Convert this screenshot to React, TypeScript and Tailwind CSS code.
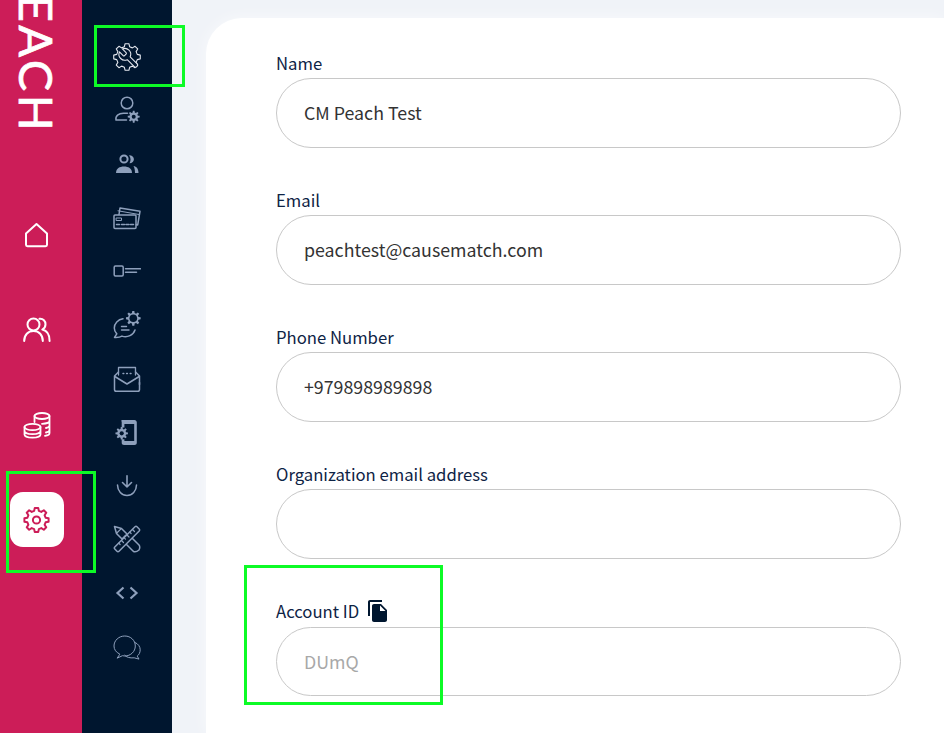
import type { ReactNode } from 'react';
import { MdFileCopy } from 'react-icons/md';

const NAV_BG = '#00162f';
const NAV_ICON = '#8ea0bc';

// builds a toothed gear outline, used by several of the settings icons
const gearPath = (cx: number, cy: number, outer: number, inner: number, teeth: number) => {
    const pts: string[] = [];
    const step = (Math.PI * 2) / teeth;
    for (let i = 0; i < teeth; i++) {
        const a = i * step - Math.PI / 2;
        const angles: [number, number][] = [
            [a - step * 0.18, outer],
            [a + step * 0.18, outer],
            [a + step * 0.32, inner],
            [a + step * 0.68, inner],
        ];
        angles.forEach(([ang, r]) => {
            pts.push(`${(cx + Math.cos(ang) * r).toFixed(2)} ${(cy + Math.sin(ang) * r).toFixed(2)}`);
        });
    }
    return `M${pts.join('L')}Z`;
};

const Icon = ({ children, className, size = 28 }: { children: ReactNode; className?: string; size?: number }) => (
    <svg
        width={size}
        height={size}
        viewBox={`0 0 ${size} ${size}`}
        fill="none"
        stroke="currentColor"
        strokeWidth="1.5"
        strokeLinecap="round"
        strokeLinejoin="round"
        className={className}
    >
        {children}
    </svg>
);

const toolIcons: ReactNode[] = [
    <>
        <path d={gearPath(14, 14, 13.4, 10.6, 8)} strokeWidth="1.1" />
        <path
            d="M14.7 6.3a1 1 0 0 0 0 1.4l1.6 1.6a1 1 0 0 0 1.4 0l3.77-3.77a6 6 0 0 1-7.94 7.94l-6.91 6.91a2.12 2.12 0 0 1-3-3l6.91-6.91a6 6 0 0 1 7.94-7.94l-3.76 3.76z"
            transform="translate(27.500 3.500) scale(-0.98 0.98)"
            fill={NAV_BG}
            strokeWidth="1.1"
        />
    </>,
    <>
        <circle cx="14" cy="7" r="5.800" />
        <path d="M3 24c-.8-4 2.500-6.800 7.500-6.800h4M3 24h10.500" />
        <path d={gearPath(20.700, 20.700, 6, 4.300, 8)} fill="currentColor" stroke="none" />
        <circle cx="20.700" cy="20.700" r="2" fill={NAV_BG} stroke="none" />
    </>,
    <>
        <circle cx="11" cy="9" r="3.600" strokeWidth="2" />
        <path d="M3 23c0-4.500 3.600-6.500 8-6.500s8 2 8 6.500Z" fill="currentColor" stroke="none" />
        <path d="M16 5.200c3.200 0 4.900 2 4.900 4s-1.700 4-4.400 4c1.500-2.400 1.500-5.400-.5-8Z" fill="currentColor" stroke="none" />
        <path d="M20.500 16c3 .6 5 2.700 5 7h-3.500c0-3-.4-5-1.500-7Z" fill="currentColor" stroke="none" />
    </>,
    <>
        <rect x="1" y="11" width="22" height="13.500" rx="1" />
        <path d="M6 10.500l1-6.500 20 3.300-2.300 13.700-1.400-.2" />
        <path d="M5 6.800l21.500 3.800" strokeWidth="1" />
        <rect x="3.500" y="14" width="5" height="2.500" strokeWidth="1" />
        <path d="M3.500 20.500h3M8.500 20.500h3M13 20.500h3M17.500 20.500h3" strokeWidth="1.500" />
    </>,
    <>
        <rect x="1.200" y="9" width="9" height="10" rx="1.200" />
        <path d="M12.500 11.800h15M12.500 15.200h11" strokeWidth="1.500" />
    </>,
    <>
        <path d="M10 7.800C5 8.500 1.300 12.300 1.300 17c0 2.400 1 4.400 2.500 5.900l-2.300 3.500c3.500.2 6-.4 7.500-1.300 5.500 1.700 11.400-1 13-6.100" />
        <path d="M8.500 15.500h5M8.500 19h7.500" strokeWidth="1.400" />
        <path d={gearPath(20.300, 7.300, 7.400, 5.400, 8)} fill="currentColor" stroke="none" />
        <circle cx="20.300" cy="7.300" r="3.800" fill={NAV_BG} stroke="none" />
    </>,
    <>
        <path d="M5.500 10V2.500h17V10" strokeWidth="1.300" />
        <path d="M5.500 7 1.500 11v13.500c0 1.100.8 1.800 1.800 1.800h21.400c1 0 1.800-.7 1.800-1.800V11l-4-4" />
        <path d="M1.800 11.500 14 19l12.200-7.500M26.500 19.500v-2" />
        <path d="M10 8.500h.8M13.600 8.500h.8M17.200 8.500h.8" />
    </>,
    <>
        <path
            d="M9 2h12.500c1.300 0 2.300 1 2.300 2.300v20.400c0 1.300-1 2.300-2.300 2.300H11c-1.300 0-2.300-1-2.300-2.300v-3.400h2.700V23h9.800V6H11.400v3.500H8.700V4.300C8.700 3 7.700 2 9 2Z"
            fill="currentColor"
            stroke="none"
        />
        <path d={gearPath(8.700, 15.300, 6.300, 4.500, 8)} fill="currentColor" stroke="none" />
        <circle cx="8.700" cy="15.300" r="2.100" fill={NAV_BG} stroke="none" />
    </>,
    <>
        <path d="M14 3.700V15M9.500 10.500 14 15l4.500-4.500" strokeWidth="1.600" />
        <path d="M4.500 13a9.500 10.500 0 0 0 19 0" />
    </>,
    <>
        <path d="M1.500 1.500 8.500 3.500 14 9 9 14 3.500 8.500Z" />
        <path d="M3.800 8 8 3.800" strokeWidth="1.200" />
        <path d="M19.500 13.500 26 20Q27.500 22 26 25Q23 27.500 20.500 26.500L13.500 19.500" />
        <path d="M22 1.800c.6-.6 1.400-.6 2 0l2.200 2.200c.6.600.6 1.400 0 2L6 26.200c-.6.600-1.400.6-2 0L1.800 24c-.6-.6-.6-1.400 0-2Z" fill={NAV_BG} />
        <path d="M19.500 4.500l2 2M16.800 7.200l1.300 1.300M14 10l2 2M11.200 12.800l1.300 1.300M8.500 15.500l2 2M5.800 18.200l1.300 1.300" strokeWidth="1.200" />
    </>,
    <>
        <path d="M10.500 8.500 4.500 14l6 5.500M17.500 8.500l6 5.500-6 5.500" strokeWidth="2.200" strokeLinecap="butt" strokeLinejoin="miter" />
    </>,
    <>
        <path d="M6.500 21C3 19.400 1 16.400 1 13 1 7.400 5.900 3 11.800 3s10.500 4.400 10.500 10-4.700 10-10.500 10c-.8 0-1.600-.1-2.400-.3L4.500 25Z" strokeWidth="1" />
        <path d="M22 9.500c3.200 1.200 5.200 4.300 5.200 7.200 0 2.800-1.100 5-3 6.400l1.800 3-4.800-1.300c-4.300.5-8-.6-9.500-2.500" strokeWidth="1" />
    </>,
];

const fields = [
    { label: 'Name', value: 'CM Peach Test' },
    { label: 'Email', value: 'peachtest@causematch.com' },
    { label: 'Phone Number', value: '+979898989898' },
    { label: 'Organization email address', value: '' },
];

const Callout = ({ className }: { className: string }) => (
    <div className={`pointer-events-none absolute border-[3px] border-[#0dfb26] ${className}`} />
);

export default function App() {
    return (
        <div className="relative flex h-[733px] w-[944px] overflow-hidden bg-[#f0f3f8] font-['Noto_Sans_CJK_SC','Noto_Sans',sans-serif]">
            <aside className="flex w-[82px] shrink-0 flex-col bg-[#cc1d58]">
                <div className="h-[188px] w-[74px] overflow-hidden">
                    <div className="mt-[-37px] ml-[13px] font-['Lato',sans-serif] text-[47px] leading-[47px] font-normal tracking-[3.500px] text-white [-webkit-text-stroke:0.7px_white] [writing-mode:vertical-rl]">
                        PEACH
                    </div>
                </div>
                <div className="flex w-[74px] flex-col items-center text-white">
                    <div className="flex h-[94.7px] items-center justify-center">
                        <Icon>
                            <path d="M3 12.500 13.500 3 24 12.500v11.300c0 .8-.6 1.400-1.400 1.400H4.400c-.8 0-1.400-.6-1.400-1.400Z" strokeWidth="2" />
                        </Icon>
                    </div>
                    <div className="flex h-[94.7px] items-center justify-center">
                        <Icon>
                            <circle cx="10.500" cy="8.500" r="6" strokeWidth="2" />
                            <path d="M1.200 25c0-6 3.800-10 9.300-10s9.300 4 9.300 10" strokeWidth="2" />
                            <path d="M16.500 2.800c3.800-.4 6 2.400 6 5.400 0 2.400-1.200 4.300-3.200 5.400 4.600 1 7.300 5 7.300 11.400" strokeWidth="2" />
                        </Icon>
                    </div>
                    <div className="flex h-[94.7px] items-center justify-center">
                        <Icon>
                            <ellipse cx="19" cy="5" rx="7.500" ry="3" strokeWidth="1.800" />
                            <path d="M26.500 5v17c0 1.500-2 2.500-4.500 2.800M26.500 10c0 1.500-3 2.800-7.500 2.800M26.500 14.500c0 1-1.200 2-3.500 2.500M26.500 19c0 1-1.200 2-3.500 2.500M11.500 5v6" strokeWidth="1.800" />
                            <ellipse cx="9.500" cy="16" rx="8" ry="3.200" strokeWidth="1.800" />
                            <path d="M1.500 16v7.500c0 1.800 3.500 3.200 8 3.200s8-1.400 8-3.200V16M1.500 20c0 1.800 3.500 3.200 8 3.200s8-1.400 8-3.200" strokeWidth="1.800" />
                        </Icon>
                    </div>
                    <div className="mt-[20px] flex h-[55px] w-[54px] items-center justify-center rounded-[13px] bg-white text-[#cc1d58]">
                        <Icon>
                            <path d={gearPath(13.500, 14, 12.200, 9.400, 8)} strokeWidth="2" />
                            <circle cx="13.500" cy="14" r="3.600" strokeWidth="2" />
                        </Icon>
                    </div>
                </div>
            </aside>

            <nav className="flex w-[90px] shrink-0 flex-col items-center bg-[#00162f] pt-[30px]" style={{ color: NAV_ICON }}>
                {toolIcons.map((icon, index) => (
                    <div key={index} className="flex h-[53.64px] items-center justify-center">
                        <Icon className={index === 0 ? 'text-[#e4e8ef]' : undefined}>{icon}</Icon>
                    </div>
                ))}
            </nav>

            <main className="min-w-0 flex-1 pt-[18px] pl-[34px]">
                <div className="h-full rounded-tl-[36px] bg-white pt-[32px] pr-[43px] pl-[70px] text-[#0e2345] shadow-[0_0_16px_rgba(255,255,255,0.6)]">
                    {fields.map((field) => (
                        <div key={field.label} className="mb-[39px]">
                            <label className="mb-[2px] block text-[16.700px] leading-[26px]">{field.label}</label>
                            <input
                                readOnly
                                value={field.value}
                                className="block h-[70px] w-full rounded-full border border-[#c8c8c8] bg-white px-[27px] pb-[2px] text-[17.800px] text-[#333333] outline-none"
                            />
                        </div>
                    ))}
                    <div>
                        <div className="mt-[1px] mb-[3px] flex h-[26px] items-center gap-[7px] text-[16.700px] leading-[26px]">
                            <label>Account ID</label>
                            <MdFileCopy className="text-[#00162f]" size={24} />
                        </div>
                        <input
                            readOnly
                            value="DUmQ"
                            className="block h-[69px] w-full rounded-full border border-[#c8c8c8] bg-white px-[27px] pb-[2px] text-[17.800px] text-[#a8a8a8] outline-none"
                        />
                    </div>
                </div>
            </main>

            <Callout className="top-[25px] left-[94px] h-[62px] w-[91px]" />
            <Callout className="top-[471px] left-[6px] h-[102px] w-[90px]" />
            <Callout className="top-[565px] left-[244px] h-[140px] w-[199px]" />
        </div>
    );
}
